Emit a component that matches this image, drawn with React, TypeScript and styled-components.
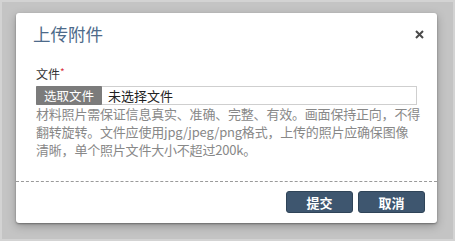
import React from 'react';
import styled, { createGlobalStyle } from 'styled-components';

const GlobalStyle = createGlobalStyle`
  html, body {
    margin: 0;
    padding: 0;
    background: #c4c4c4;
  }
  * {
    box-sizing: border-box;
  }
`;

const Page = styled.div`
  width: 455px;
  height: 241px;
  border: 2px solid #d3d3d3;
  padding: 11px 0 0 14px;
  background: #c4c4c4;
  font-family: 'Noto Sans CJK SC', 'Noto Sans', sans-serif;
`;

const Modal = styled.div`
  width: 421px;
  background: #fff;
  border-radius: 3px;
  box-shadow: 0 1px 2px rgba(0, 0, 0, 0.35), 0 3px 10px rgba(0, 0, 0, 0.25);
`;

const Header = styled.div`
  display: flex;
  align-items: center;
  justify-content: space-between;
  padding: 9px 12px 0 17px;
`;

const Title = styled.h3`
  margin: 0;
  font-size: 17.5px;
  line-height: 24px;
  font-weight: normal;
  color: #4d6a8a;
`;

const Close = styled.button`
  display: flex;
  align-items: center;
  justify-content: center;
  width: 12px;
  height: 12px;
  padding: 0;
  border: 0;
  background: none;
  cursor: pointer;
`;

const Body = styled.div`
  padding: 19px 20px 22px 20px;
`;

const Label = styled.label`
  display: block;
  font-size: 12px;
  line-height: 18px;
  color: #333;
  margin-bottom: 3px;
`;

const Required = styled.span`
  color: #d9333f;
  font-size: 10px;
  vertical-align: top;
  line-height: 14px;
`;

const FileBox = styled.div`
  display: flex;
  align-items: stretch;
  height: 19px;
  border: 1px solid #cfcfcf;
`;

const PickButton = styled.span`
  display: flex;
  align-items: center;
  justify-content: center;
  width: 66px;
  background: #7b7b7b;
  color: #fff;
  font-size: 12.5px;
  margin: -1px 0 -1px -1px;
  border-radius: 1px;
`;

const FileName = styled.span`
  display: flex;
  align-items: center;
  padding-left: 6px;
  font-size: 13px;
  color: #222;
`;

const Help = styled.p`
  margin: 0 -16px 0 0;
  font-size: 13px;
  line-height: 18px;
  letter-spacing: -0.2px;
  color: #888;
`;

const Footer = styled.div`
  display: flex;
  justify-content: flex-end;
  gap: 5px;
  border-top: 1px dashed #9a9a9a;
  padding: 9px 12px 10px;
`;

const Button = styled.button`
  width: 67px;
  height: 22px;
  padding: 0;
  border: 1px solid #2f4458;
  border-radius: 3px;
  background: #3e566f;
  color: #fff;
  font-family: inherit;
  font-size: 13px;
  font-weight: bold;
  cursor: pointer;
`;

export default function App() {
  return (
    <>
      <GlobalStyle />
      <Page>
        <Modal>
          <Header>
            <Title>上传附件</Title>
            <Close aria-label="关闭">
              <svg width="9" height="9" viewBox="0 0 9 9">
                <path d="M1 1 L8 8 M8 1 L1 8" stroke="#4a4a4a" strokeWidth="2" />
              </svg>
            </Close>
          </Header>
          <Body>
            <Label>
              文件<Required>*</Required>
            </Label>
            <FileBox>
              <PickButton>选取文件</PickButton>
              <FileName>未选择文件</FileName>
            </FileBox>
            <Help>
              材料照片需保证信息真实、准确、完整、有效。画面保持正向，不得
              <br />
              翻转旋转。文件应使用jpg/jpeg/png格式，上传的照片应确保图像
              <br />
              清晰，单个照片文件大小不超过200k。
            </Help>
          </Body>
          <Footer>
            <Button>提交</Button>
            <Button>取消</Button>
          </Footer>
        </Modal>
      </Page>
    </>
  );
}
